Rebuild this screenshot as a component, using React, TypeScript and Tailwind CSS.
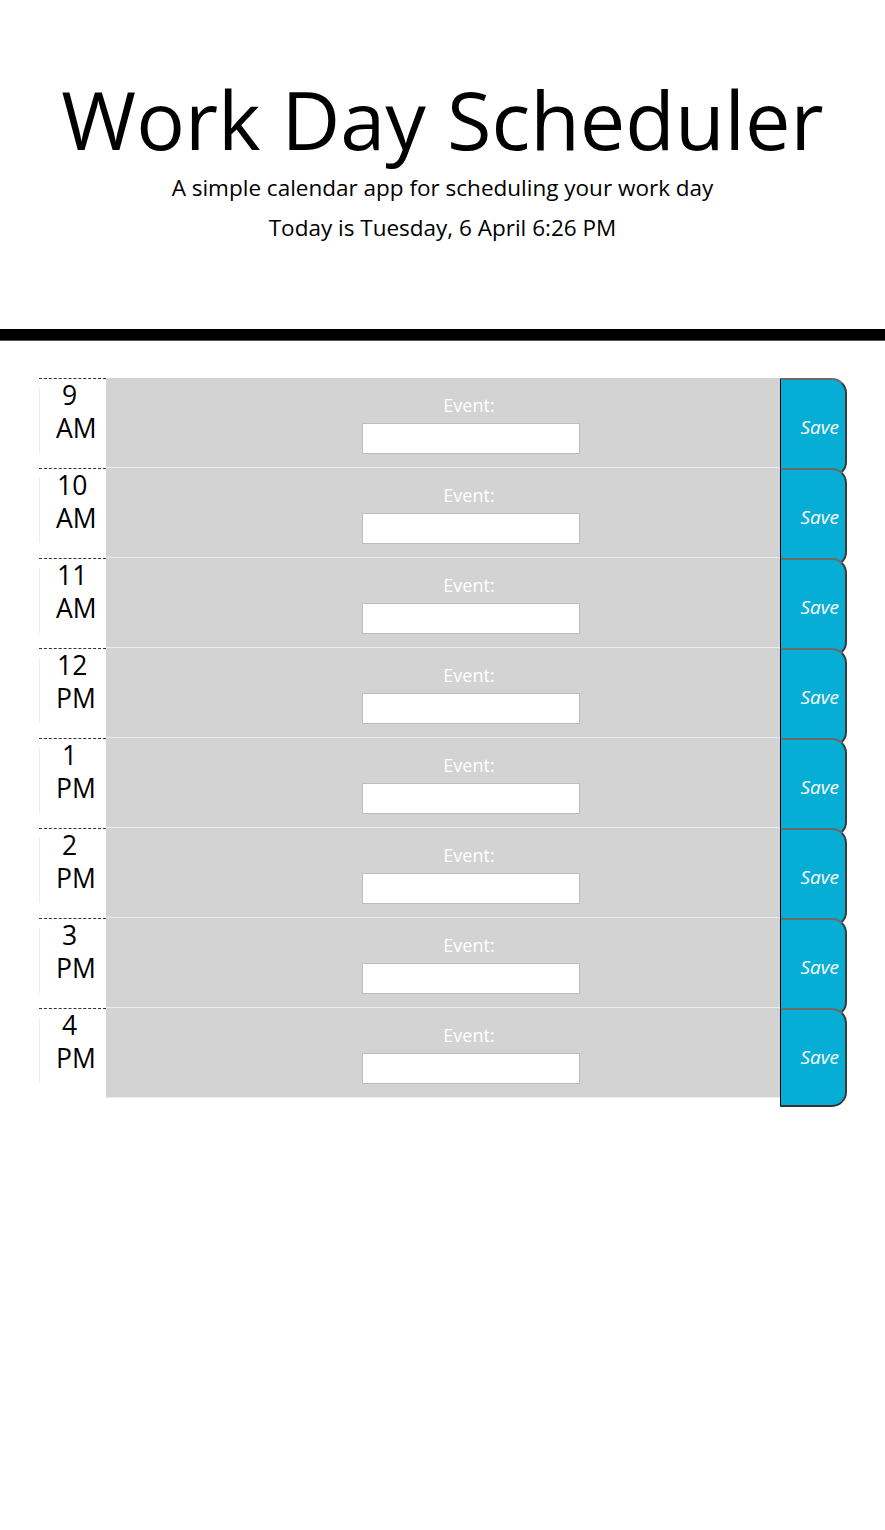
const hours = [
  { h: "9", p: "AM" },
  { h: "10", p: "AM" },
  { h: "11", p: "AM" },
  { h: "12", p: "PM" },
  { h: "1", p: "PM" },
  { h: "2", p: "PM" },
  { h: "3", p: "PM" },
  { h: "4", p: "PM" },
];

const Row = ({ h, p }: { h: string; p: string }) => {
  return (
    <div className="flex h-[90px]">
      {/* Hour */}
      <div className="w-[67px] border-t border-dashed border-[#333] relative text-[26.5px] leading-[33px] text-black">
        <div className="absolute left-0 top-[9px] h-[65px] border-l border-[#ececec]" />
        <div className={h.length === 1 ? "pl-[23px]" : "pl-[18px]"}>{h}</div>
        <div className="pl-[17px]">{p}</div>
      </div>
      {/* Event */}
      <div className="w-[674px] bg-[#d3d3d3] border-b border-[#ebebeb] pl-[256px] pt-[15px]">
        <div className="w-[218px] text-center text-white text-[18px] leading-[25px] pr-[4px]">Event:</div>
        <input
          type="text"
          className="mt-[5px] w-[218px] h-[31px] bg-white border border-[#bdbdbd] outline-none"
        />
      </div>
      {/* Save */}
      <button className="w-[67px] h-[99px] mb-[-9px] bg-[#06aed5] border-l border-l-black border-t-2 border-t-[#6a6a6a] border-r-2 border-b-2 border-r-[#3a3a3a] border-b-[#333] rounded-r-[15px] text-white italic text-[19px] text-right pr-[6px] relative">
        Save
      </button>
    </div>
  );
};

const App = () => {
  return (
    <div className="w-[885px] min-h-[1530px] bg-white" style={{ fontFamily: "'Open Sans', sans-serif" }}>
      {/* Header */}
      <div className="pt-[71px] text-center text-black">
        <h1 className="text-[81px] leading-[96px] font-normal">Work Day Scheduler</h1>
        <p className="mt-[4px] text-[22.5px] leading-[33px]">A simple calendar app for scheduling your work day</p>
        <p className="mt-[7px] text-[22.5px] leading-[33px]">Today is Tuesday, 6 April 6:26 PM</p>
      </div>
      <div className="mt-[85px] h-[12px] bg-black border-b border-[#555]" />
      {/* Time blocks */}
      <div className="mt-[37px] pl-[39px]">
        {hours.map((x) => (
          <Row key={x.h} h={x.h} p={x.p} />
        ))}
      </div>
    </div>
  );
};

export default App;
